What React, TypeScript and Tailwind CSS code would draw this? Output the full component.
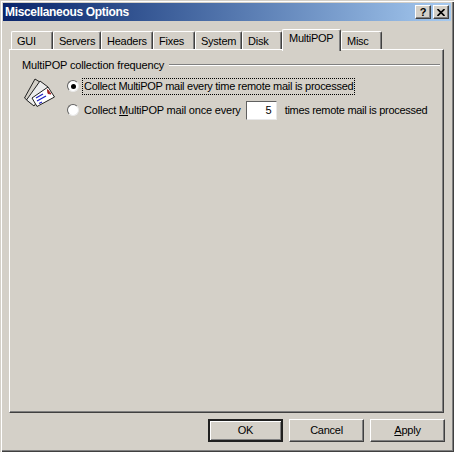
import React from "react";

const Raised = "border border-t-white border-l-white border-r-[#404040] border-b-[#404040] shadow-[inset_-1px_-1px_0_#808080]";

function Tab({ label, w }: { label: string; w: string }) {
  return (
    <div className={`${w} h-[18px] shrink-0 mt-[3px] flex items-center pl-[5px] pt-[2px] rounded-t-[2px] border-t border-l border-r border-t-white border-l-white border-r-[#404040] shadow-[inset_-1px_0_0_#808080] text-[11px] tracking-[-0.25px] text-black`}>
      {label}
    </div>
  );
}

function MailIcon() {
  return (
    <svg width="32" height="30" viewBox="0 0 32 30" className="shrink-0">
      <path d="M0.5 20 L11 1 L19 6 L8 26 Z" fill="#d4d0c8" stroke="#202020" strokeWidth="1" />
      <path d="M2.5 22 L16 3 L24 9 L10 28 Z" fill="#ececec" stroke="#202020" strokeWidth="1" />
      <path d="M8 20 L24 9 L30.5 19 L13 28.5 Z" fill="#ffffff" stroke="#202020" strokeWidth="1" />
      <path d="M23.5 11.5 L27 16 L24 15.5 Z" fill="#a02020" stroke="#a02020" strokeWidth="1" />
      <path d="M12 20 L19 16 M13 23 L22 18 M15 25.5 L18 24" stroke="#2020c0" strokeWidth="1.3" fill="none" />
    </svg>
  );
}

function Radio({ on }: { on?: boolean }) {
  return (
    <div className="w-[12px] h-[12px] shrink-0 rounded-full bg-white border border-t-[#606060] border-l-[#606060] border-r-[#e8e8e8] border-b-[#e8e8e8] flex items-center justify-center">
      {on && <div className="w-[5px] h-[5px] rounded-full bg-black" />}
    </div>
  );
}

function Btn({ children, def }: { children: React.ReactNode; def?: boolean }) {
  return (
    <div className={`w-[75px] h-[23px] flex items-center justify-center text-[11px] tracking-[-0.25px] text-black ${def ? "border-2 border-t-[#202020] border-l-[#202020] border-r-[#202020] border-b-[#202020] shadow-[inset_1px_1px_0_#fff,inset_-1px_-1px_0_#808080]" : Raised}`}>
      {children}
    </div>
  );
}

export default function App() {
  return (
    <div
      className="w-[454px] h-[452px] overflow-hidden bg-[#d4d0c8] flex flex-col pt-[3px] pl-[3px] pr-[3px] shadow-[inset_1px_1px_0_#d4d0c8,inset_2px_2px_0_#fff,inset_-1px_-1px_0_#404040,inset_-2px_-2px_0_#808080]"
      style={{ fontFamily: '"Liberation Sans", Arial, sans-serif' }}
    >
      <div className="h-[18px] shrink-0 flex items-center justify-between bg-gradient-to-r from-[#0a246a] to-[#a6caf0] pl-[2px] pr-[2px]">
        <span className="text-[12px] font-bold tracking-[-0.33px] text-white">Miscellaneous Options</span>
        <div className="flex gap-[2px]">
          <div className={`w-[16px] h-[14px] bg-[#d4d0c8] ${Raised} flex items-center justify-center text-[11px] font-bold text-black`}>?</div>
          <div className={`w-[16px] h-[14px] bg-[#d4d0c8] ${Raised} flex items-center justify-center`}>
            <svg width="8" height="7" viewBox="0 0 8 7"><path d="M0.5 0 L7.5 7 M7.5 0 L0.5 7" stroke="#000" strokeWidth="1.6" /></svg>
          </div>
        </div>
      </div>

      <div className="flex-1 flex flex-col pt-[7px] pl-[6px] pr-[6px]">
        <div className="h-[21px] flex pl-[2px] relative z-10 shrink-0">
          <Tab label="GUI" w="w-[42px]" />
          <Tab label="Servers" w="w-[48px]" />
          <Tab label="Headers" w="w-[52px]" />
          <Tab label="Fixes" w="w-[42px]" />
          <Tab label="System" w="w-[47px]" />
          <Tab label="Disk" w="w-[40px]" />
          <div className="w-[59px] h-[22px] shrink-0 mt-[1px] -mb-[2px] bg-[#d4d0c8] pl-[6px] rounded-t-[2px] border-t border-l border-r border-t-white border-l-white border-r-[#404040] shadow-[inset_-1px_0_0_#808080] text-[11px] tracking-[-0.25px] text-black">
            MultiPOP
          </div>
          <Tab label="Misc" w="w-[41px]" />
        </div>
        <div className="w-[435px] h-[364px] shrink-0 border border-t-white border-l-white border-r-[#404040] border-b-[#404040] shadow-[inset_-1px_-1px_0_#808080] pl-[12px] pr-[3px] pt-[6px]">
          <div className="flex items-center gap-[5px] h-[18px]">
            <span className="text-[11px] tracking-[-0.15px] text-black whitespace-nowrap">MultiPOP collection frequency</span>
            <div className="flex-1 h-[2px] border-t border-t-[#808080] border-b border-b-white" />
          </div>
          <div className="flex">
            <div className="ml-[2px] mt-[4px] w-[33px]"><MailIcon /></div>
            <div className="ml-[10px] flex flex-col">
              <div className="flex items-center h-[24px]">
                <Radio on />
                <span className="ml-[3px] border border-dotted border-black px-[1px] leading-[15px] text-[11px] tracking-[-0.28px] text-black whitespace-nowrap">
                  Collect MultiPOP mail every time remote mail is processed
                </span>
              </div>
              <div className="flex items-center h-[24px]">
                <Radio />
                <span className="ml-[5px] text-[11px] tracking-[-0.2px] text-black whitespace-nowrap">
                  Collect <span className="underline">M</span>ultiPOP mail once every
                </span>
                <div className="ml-[5px] w-[31px] h-[19px] bg-white border border-t-[#606060] border-l-[#606060] border-r-[#e8e8e8] border-b-[#e8e8e8] flex items-center justify-end pr-[4px] text-[11px] text-black">
                  5
                </div>
                <span className="ml-[8px] text-[11px] tracking-[-0.3px] text-black whitespace-nowrap">times remote mail is processed</span>
              </div>
            </div>
          </div>
        </div>
        <div className="flex justify-end gap-[6px] mt-[6px]">
          <Btn def>OK</Btn>
          <Btn>Cancel</Btn>
          <Btn><span><span className="underline">A</span>pply</span></Btn>
        </div>
      </div>
    </div>
  );
}
